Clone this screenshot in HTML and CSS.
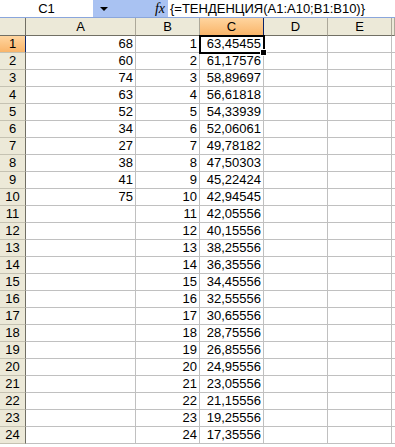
FILE: index.html
```
<!DOCTYPE html>
<html lang="ru">
<head>
  <meta charset="UTF-8" />
  <title>ТЕНДЕНЦИЯ</title>
  <link rel="stylesheet" href="styles.css">
</head>
<body>

  <!-- Formula bar -->
  <div class="formula-bar">
    <div class="name-box">C1</div>
    <div class="name-drop"><span class="arrow"></span></div>
    <div class="fx">fx</div>
    <div class="formula">{=ТЕНДЕНЦИЯ(A1:A10;B1:B10)}</div>
  </div>

  <!-- Sheet -->
  <div class="sheet" id="sheet">
    <div class="hd corner"></div>
    <div class="hd col">A</div>
    <div class="hd col">B</div>
    <div class="hd col active">C</div>
    <div class="hd col">D</div>
    <div class="hd col">E</div>
    <div class="hd col last"></div>
  </div>

  <script>
    const colA = [68, 60, 74, 63, 52, 34, 27, 38, 41, 75];
    const colC = ['63,45455', '61,17576', '58,89697', '56,61818', '54,33939', '52,06061',
      '49,78182', '47,50303', '45,22424', '42,94545', '42,05556', '40,15556', '38,25556',
      '36,35556', '34,45556', '32,55556', '30,65556', '28,75556', '26,85556', '24,95556',
      '23,05556', '21,15556', '19,25556', '17,35556'];

    const sheet = document.getElementById('sheet');

    function cell(cls, text) {
      const el = document.createElement('div');
      el.className = cls;
      el.textContent = text;
      sheet.appendChild(el);
      return el;
    }

    for (let r = 1; r <= 24; r++) {
      cell(r === 1 ? 'hd row active' : 'hd row', r);
      cell('c num', colA[r - 1] !== undefined ? colA[r - 1] : '');
      cell('c num', r);
      cell(r === 1 ? 'c num sel' : 'c num', colC[r - 1]);
      cell('c', '');
      cell('c', '');
      cell('c last', '');
    }
  </script>
</body>
</html>
```
FILE: styles.css
```
body {
  margin: 0;
  font-family: 'Liberation Sans', Arial, sans-serif;
  font-size: 13px;
  color: #000;
  background: #fff;
  overflow: hidden;
}

.formula-bar {
  display: flex;
  height: 18px;
  background: #a9c2f2;
  border-bottom: 1px solid #8aa6dc;
  box-sizing: border-box;
}

.name-box {
  width: 93px;
  background: #fff;
  text-align: center;
  line-height: 17px;
}

.name-drop {
  width: 46px;
  display: flex;
  align-items: center;
  padding-left: 7px;
  box-sizing: border-box;
}

.arrow {
  width: 0;
  height: 0;
  border-left: 4px solid transparent;
  border-right: 4px solid transparent;
  border-top: 4px solid #000;
}

.fx {
  width: 29px;
  font-family: 'Liberation Serif', 'Times New Roman', serif;
  font-style: italic;
  font-size: 14px;
  text-align: right;
  padding-right: 3px;
  line-height: 17px;
  box-sizing: border-box;
}

.formula {
  flex: 1;
  background: #fff;
  line-height: 17px;
  padding-left: 2px;
  white-space: nowrap;
}

.sheet {
  display: grid;
  grid-template-columns: 26px 110px 64px 64px 64px 64px 3px;
  grid-template-rows: 18px;
  grid-auto-rows: 17px;
}

.hd {
  background: #ece9d8;
  text-align: center;
  box-sizing: border-box;
  line-height: 16px;
}

.hd.col {
  border-right: 1px solid #aca899;
  border-bottom: 1px solid #716f64;
  line-height: 17px;
}

.hd.corner {
  border-right: 1px solid #716f64;
  border-bottom: 1px solid #716f64;
}

.hd.row {
  border-right: 1px solid #716f64;
  border-bottom: 1px solid #c5c2b2;
}

.hd.active {
  background: linear-gradient(#ffd59f, #f9b56a);
}

.hd.col.active {
  border-right: 1px solid #0a246a;
}

.hd.row.active {
  border-right: 1px solid #0a246a;
}

.c {
  border-right: 1px solid #c0c0c0;
  border-bottom: 1px solid #c0c0c0;
  box-sizing: border-box;
  line-height: 16px;
  white-space: nowrap;
}

.num {
  text-align: right;
  padding-right: 2px;
}

.c.last {
  border-right: none;
}

.sel {
  position: relative;
  outline: 2px solid #000;
  outline-offset: -1px;
  z-index: 1;
}

.sel::after {
  content: "";
  position: absolute;
  right: -4px;
  bottom: -4px;
  width: 5px;
  height: 5px;
  background: #000;
  border: 1px solid #fff;
}
```
